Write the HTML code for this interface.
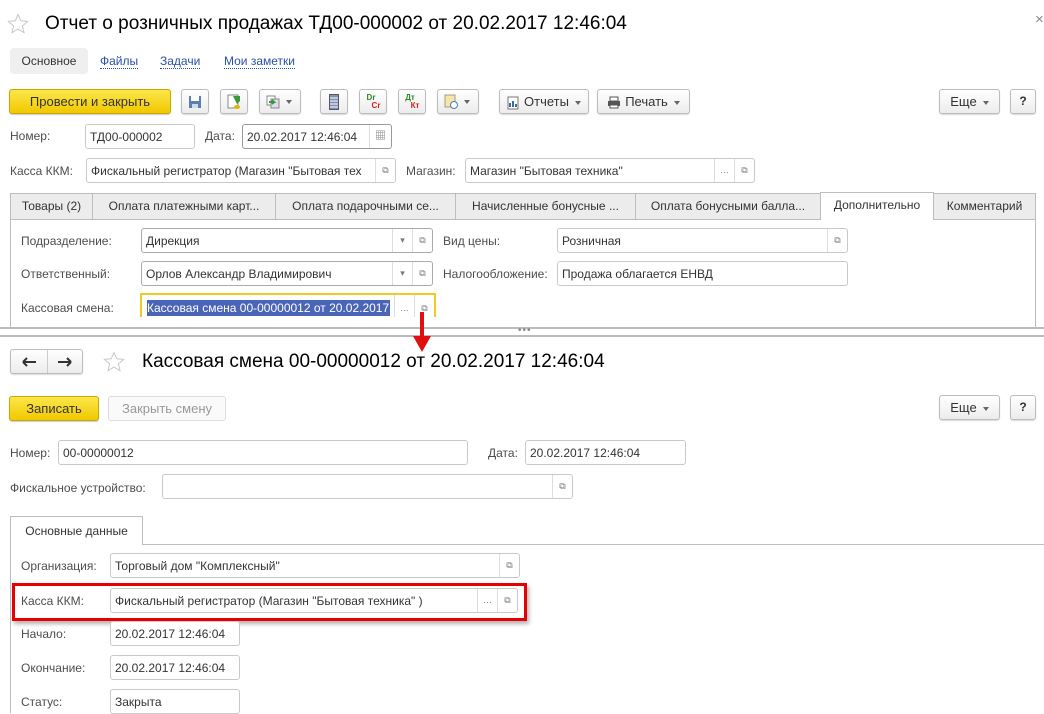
<!DOCTYPE html>
<html><head><meta charset="utf-8"><style>
*{box-sizing:border-box;margin:0;padding:0}
body{width:1044px;height:713px;overflow:hidden;background:#fff;font-family:"Liberation Sans","Noto Sans CJK SC",sans-serif;font-size:12px;color:#333;position:relative}
.a{position:absolute;white-space:nowrap}
.l{position:absolute;color:#4d4d4d;white-space:nowrap;font-size:12px}
.f{position:absolute;border:1px solid #c9c9c9;border-radius:3px;background:#fff;height:25px;line-height:24px;padding-left:4px;white-space:nowrap;overflow:hidden;color:#333}
.btn{position:absolute;height:25px;border:1px solid #bcbcbc;border-radius:3px;background:linear-gradient(#fff,#ececec);box-shadow:0 1px 1px rgba(0,0,0,.15);line-height:23px;text-align:center;color:#333;white-space:nowrap}
.yb{position:absolute;height:25px;border:1px solid #c9a800;border-radius:3px;background:linear-gradient(#fbe74a,#f1c800);box-shadow:0 1px 1px rgba(0,0,0,.2);line-height:23px;text-align:center;color:#333;font-size:13px}
.sb{position:absolute;top:0;bottom:0;width:20px;border-left:1px solid #ddd;text-align:center;color:#777;font-size:9px;line-height:23px}
.tab{position:absolute;top:193px;height:26px;border:1px solid #bdbdbd;border-bottom:none;background:#ececec;line-height:24px;text-align:center;color:#333;white-space:nowrap}
.title{position:absolute;font-size:19px;color:#000;white-space:nowrap}
.dd{display:inline-block;width:0;height:0;border-left:3px solid transparent;border-right:3px solid transparent;border-top:4px solid #666;vertical-align:middle;margin-left:6px}
</style></head><body>
<svg class="a" style="left:7px;top:13px" width="22" height="22" viewBox="0 0 22 22"><path d="M11 1.5l2.8 6.3 6.8.6-5.2 4.5 1.6 6.7L11 16.1l-6 3.5 1.6-6.7-5.2-4.5 6.8-.6z" fill="none" stroke="#c8c8c8"/></svg>
<div class="title" style="left:45px;top:13px">Отчет о розничных продажах ТД00-000002 от 20.02.2017 12:46:04</div>
<div class="a" style="left:1035px;top:11px;color:#888;font-size:15px">×</div>
<div class="a" style="left:10px;top:48px;width:78px;height:26px;background:#efefef;border-radius:4px;line-height:26px;text-align:center">Основное</div>
<div class="a" style="left:100px;top:54px;color:#2850a8;border-bottom:1px dotted #2850a8">Файлы</div>
<div class="a" style="left:160px;top:54px;color:#2850a8;border-bottom:1px dotted #2850a8">Задачи</div>
<div class="a" style="left:224px;top:54px;color:#2850a8;border-bottom:1px dotted #2850a8">Мои заметки</div>

<div class="yb" style="left:9px;top:89px;width:162px">Провести и закрыть</div>
<div class="btn" style="left:181px;top:89px;width:28px"><svg width="14" height="14" style="margin-top:5px"><rect x="1" y="1" width="12" height="12" fill="#5a7fb0"/><rect x="3" y="1" width="8" height="5" fill="#fff"/><rect x="4" y="9" width="6" height="4" fill="#d0dbe8"/></svg></div>
<div class="btn" style="left:220px;top:89px;width:28px"><svg width="14" height="16" style="margin-top:4px"><rect x="1" y="1" width="10" height="13" fill="#fff" stroke="#888"/><path d="M6 2h7v5l-3 3z" fill="#3a9a3a"/><ellipse cx="10" cy="13" rx="3" ry="2" fill="#e8b000"/></svg></div>
<div class="btn" style="left:259px;top:89px;width:42px;text-align:left;padding-left:6px"><svg width="14" height="14" style="vertical-align:middle"><rect x="1" y="1" width="8" height="9" fill="#fff" stroke="#888"/><rect x="5" y="4" width="8" height="9" fill="#dde" stroke="#888"/><path d="M3 7h5l-2-2M8 7l-2 2" stroke="#3a9a3a" fill="none" stroke-width="2"/></svg><span class="dd"></span></div>
<div class="btn" style="left:320px;top:89px;width:28px"><svg width="10" height="16" style="margin-top:4px"><rect x="0.5" y="0.5" width="9" height="15" fill="#7d93b5" stroke="#556"/><path d="M1 4h8M1 7h8M1 10h8M1 13h8" stroke="#fff"/></svg></div>
<div class="btn" style="left:359px;top:89px;width:28px;font-size:8px;line-height:8px;font-weight:bold;padding-top:4px"><div style="color:#2a8a2a;margin-left:-4px">Dr</div><div style="color:#d02020;margin-left:6px">Cr</div></div>
<div class="btn" style="left:398px;top:89px;width:28px;font-size:8px;line-height:8px;font-weight:bold;padding-top:4px"><div style="color:#2a8a2a;margin-left:-4px">Дт</div><div style="color:#d02020;margin-left:6px">Кт</div></div>
<div class="btn" style="left:437px;top:89px;width:42px;text-align:left;padding-left:6px"><svg width="14" height="15" style="vertical-align:middle"><rect x="1" y="1" width="10" height="12" fill="#f6e7a8" stroke="#a98"/><circle cx="10" cy="11" r="3.5" fill="#fff" stroke="#4a7ab8"/></svg><span class="dd"></span></div>
<div class="btn" style="left:499px;top:89px;width:90px;font-size:13px"><svg width="13" height="14" style="vertical-align:middle;margin-right:4px"><rect x="1" y="1" width="10" height="12" fill="#fff" stroke="#777"/><path d="M3 11V7M6 11V5M9 11V8" stroke="#3a6ab0" stroke-width="2"/></svg>Отчеты<span class="dd"></span></div>
<div class="btn" style="left:597px;top:89px;width:93px;font-size:13px"><svg width="14" height="13" style="vertical-align:middle;margin-right:4px"><rect x="3" y="1" width="8" height="4" fill="#fff" stroke="#555"/><rect x="1" y="5" width="12" height="5" fill="#555"/><rect x="3" y="9" width="8" height="3" fill="#fff" stroke="#555"/></svg>Печать<span class="dd"></span></div>
<div class="btn" style="left:939px;top:89px;width:61px;font-size:13px">Еще<span class="dd"></span></div>
<div class="btn" style="left:1010px;top:89px;width:26px;font-weight:bold">?</div>

<div class="l" style="left:10px;top:129px">Номер:</div>
<div class="f" style="left:85px;top:124px;width:110px">ТД00-000002</div>
<div class="l" style="left:205px;top:129px">Дата:</div>
<div class="f" style="left:242px;top:124px;width:150px;border-color:#999">20.02.2017 12:46:04<div class="sb" style="right:0;width:22px;font-size:11px">▦</div></div>
<div class="l" style="left:10px;top:164px">Касса ККМ:</div>
<div class="f" style="left:86px;top:158px;width:310px;padding-right:22px">Фискальный регистратор (Магазин "Бытовая тех<div class="sb" style="right:0;background:#fff">⧉</div></div>
<div class="l" style="left:406px;top:164px">Магазин:</div>
<div class="f" style="left:465px;top:158px;width:290px">Магазин "Бытовая техника"<div class="sb" style="right:20px">…</div><div class="sb" style="right:0">⧉</div></div>

<div class="a" style="left:10px;top:219px;width:1026px;height:110px;border-left:1px solid #bdbdbd;border-right:1px solid #bdbdbd;border-top:1px solid #bdbdbd"></div>
<div class="tab" style="left:10px;width:83px">Товары (2)</div>
<div class="tab" style="left:92px;width:184px">Оплата платежными карт...</div>
<div class="tab" style="left:275px;width:181px">Оплата подарочными се...</div>
<div class="tab" style="left:455px;width:181px">Начисленные бонусные ...</div>
<div class="tab" style="left:635px;width:186px">Оплата бонусными балла...</div>
<div class="tab" style="left:820px;width:114px;background:#fff;height:28px;top:192px">Дополнительно</div>
<div class="tab" style="left:933px;width:103px">Комментарий</div>

<div class="l" style="left:21px;top:234px">Подразделение:</div>
<div class="f" style="left:141px;top:228px;width:292px;border-color:#aaa">Дирекция<div class="sb" style="right:20px">▾</div><div class="sb" style="right:0">⧉</div></div>
<div class="l" style="left:443px;top:234px">Вид цены:</div>
<div class="f" style="left:557px;top:228px;width:291px">Розничная<div class="sb" style="right:0">⧉</div></div>
<div class="l" style="left:21px;top:267px">Ответственный:</div>
<div class="f" style="left:141px;top:261px;width:292px;border-color:#aaa">Орлов Александр Владимирович<div class="sb" style="right:20px">▾</div><div class="sb" style="right:0">⧉</div></div>
<div class="l" style="left:443px;top:267px">Налогообложение:</div>
<div class="f" style="left:557px;top:261px;width:291px">Продажа облагается ЕНВД</div>
<div class="l" style="left:21px;top:301px">Кассовая смена:</div>
<div class="a" style="left:140px;top:293px;width:296px;height:24px;border:2px solid #f3c928;border-bottom:none;overflow:hidden"><span style="position:absolute;left:5px;top:5px;background:#4a64b8;color:#fff;width:243px;overflow:hidden;line-height:16px">Кассовая смена 00-00000012 от 20.02.2017</span><div class="sb" style="right:20px;line-height:26px">…</div><div class="sb" style="right:0;line-height:26px">⧉</div></div>

<div class="a" style="left:0;top:327px;width:1044px;height:10px;background:#fff;border-top:2px solid #bbb;border-bottom:2px solid #bbb"></div>
<div class="a" style="left:518px;top:325px;color:#888;font-size:10px;letter-spacing:1px">•••</div>
<svg class="a" style="left:411px;top:312px" width="22" height="42"><rect x="9" y="0" width="4" height="26" fill="#e01010"/><path d="M2 24h18l-9 16z" fill="#e01010"/></svg>

<div class="btn" style="left:10px;top:349px;width:73px"><svg class="a" style="left:10px;top:7px" width="16" height="10"><path d="M2 5h13M2 5l4-4M2 5l4 4" stroke="#333" stroke-width="2" fill="none"/></svg><span style="position:absolute;left:36px;top:0;bottom:0;border-left:1px solid #ccc"></span><svg class="a" style="left:46px;top:7px" width="16" height="10"><path d="M1 5h13M14 5l-4-4M14 5l-4 4" stroke="#333" stroke-width="2" fill="none"/></svg></div>
<svg class="a" style="left:103px;top:351px" width="22" height="22" viewBox="0 0 22 22"><path d="M11 1.5l2.8 6.3 6.8.6-5.2 4.5 1.6 6.7L11 16.1l-6 3.5 1.6-6.7-5.2-4.5 6.8-.6z" fill="none" stroke="#c8c8c8"/></svg>
<div class="title" style="left:142px;top:351px">Кассовая смена 00-00000012 от 20.02.2017 12:46:04</div>

<div class="yb" style="left:9px;top:396px;width:90px">Записать</div>
<div class="btn" style="left:108px;top:396px;width:118px;color:#999;box-shadow:none;background:#fafafa;border-color:#ddd;font-size:13px">Закрыть смену</div>
<div class="btn" style="left:939px;top:395px;width:61px;font-size:13px">Еще<span class="dd"></span></div>
<div class="btn" style="left:1010px;top:395px;width:26px;font-weight:bold">?</div>

<div class="l" style="left:10px;top:446px">Номер:</div>
<div class="f" style="left:58px;top:440px;width:410px">00-00000012</div>
<div class="l" style="left:488px;top:446px">Дата:</div>
<div class="f" style="left:525px;top:440px;width:161px">20.02.2017 12:46:04</div>
<div class="l" style="left:10px;top:481px">Фискальное устройство:</div>
<div class="f" style="left:162px;top:474px;width:411px"><div class="sb" style="right:0">⧉</div></div>

<div class="a" style="left:10px;top:544px;width:1034px;height:169px;border-left:1px solid #bdbdbd;border-top:1px solid #bdbdbd"></div>
<div class="a" style="left:10px;top:516px;width:133px;height:29px;border:1px solid #bdbdbd;border-bottom:none;background:#fff;line-height:28px;text-align:center">Основные данные</div>

<div class="l" style="left:21px;top:559px">Организация:</div>
<div class="f" style="left:110px;top:553px;width:410px">Торговый дом "Комплексный"<div class="sb" style="right:0">⧉</div></div>
<div class="a" style="left:12px;top:583px;width:515px;height:38px;border:3px solid #e60000;box-shadow:2px 3px 4px rgba(0,0,0,.3)"></div>
<div class="l" style="left:21px;top:594px">Касса ККМ:</div>
<div class="f" style="left:110px;top:588px;width:408px">Фискальный регистратор (Магазин "Бытовая техника" )<div class="sb" style="right:20px">…</div><div class="sb" style="right:0">⧉</div></div>
<div class="l" style="left:21px;top:627px">Начало:</div>
<div class="f" style="left:110px;top:621px;width:130px">20.02.2017 12:46:04</div>
<div class="l" style="left:21px;top:661px">Окончание:</div>
<div class="f" style="left:110px;top:655px;width:130px">20.02.2017 12:46:04</div>
<div class="l" style="left:21px;top:695px">Статус:</div>
<div class="f" style="left:110px;top:689px;width:130px">Закрыта</div>
</body></html>
